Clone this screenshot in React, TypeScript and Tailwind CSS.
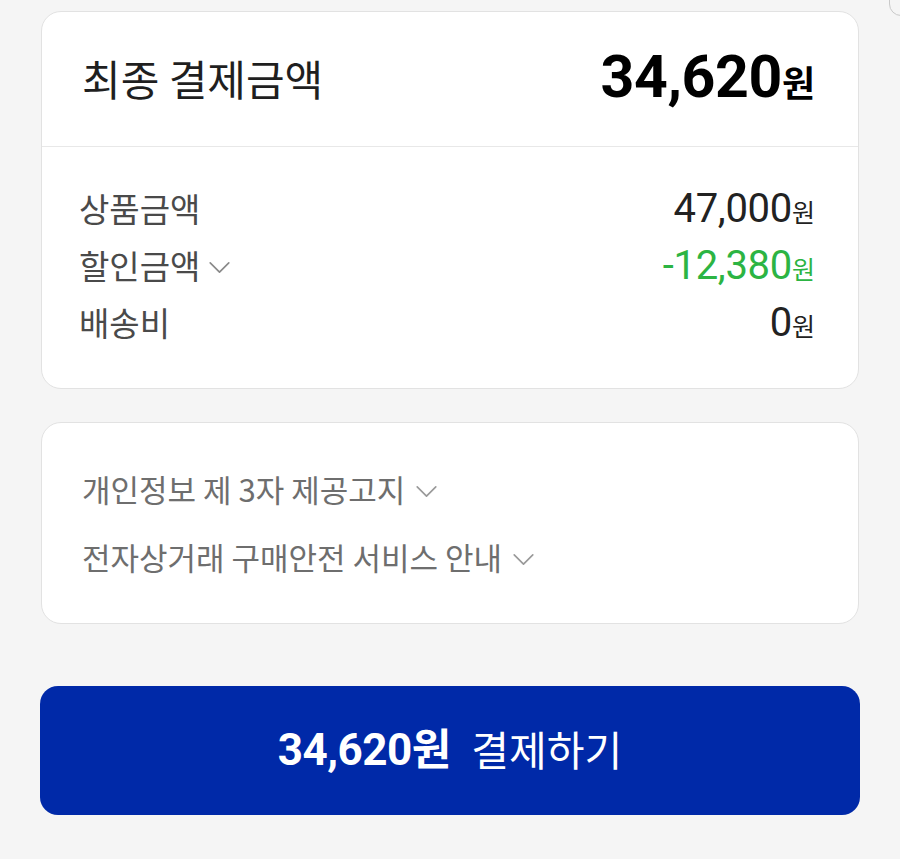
import React from "react";

const KR = '"Noto Sans CJK KR", "Noto Sans", sans-serif';
const NUM = 'Roboto, "Noto Sans CJK KR", sans-serif';

function Chevron({ className = "" }: { className?: string }) {
  return (
    <svg viewBox="0 0 24 14" className={className} fill="none" stroke="currentColor" strokeWidth={1.8} strokeLinecap="round" strokeLinejoin="round">
      <polyline points="2,2 12,12 22,2" />
    </svg>
  );
}

function PriceRow({
  label,
  amount,
  green,
  chevron,
}: {
  label: string;
  amount: string;
  green?: boolean;
  chevron?: boolean;
}) {
  return (
    <div className="flex h-[57px] items-center justify-between">
      <div className="flex items-center gap-[8px] text-[33px] text-[#4a4a4a]" style={{ fontFamily: KR }}>
        <span>{label}</span>
        {chevron && <Chevron className="mt-[3px] h-[13px] w-[23px] text-[#8a8a8a]" />}
      </div>
      <div
        className={`flex items-baseline ${green ? "text-[#2cb443]" : "text-[#222]"}`}
        style={{ fontFamily: NUM }}
      >
        <span className="text-[40px] tracking-[-0.3px]">{amount}</span>
        <span className="text-[25px]" style={{ fontFamily: KR }}>원</span>
      </div>
    </div>
  );
}

export default function App() {
  const policies = ["개인정보 제 3자 제공고지", "전자상거래 구매안전 서비스 안내"];

  return (
    <div className="relative h-[859px] w-[900px] overflow-hidden bg-[#f5f5f5] px-[41px] pt-[11px]">
      <div className="absolute left-[889px] top-[-30px] h-[46px] w-[40px] rounded-[12px] border border-[#c9c9c9] bg-[#f5f5f5]" />

      {/* final amount card */}
      <div className="rounded-[20px] border border-[#e2e2e2] bg-white">
        <div className="flex h-[135px] items-center justify-between border-b border-[#e8e8e8] pb-[4px] pl-[40px] pr-[43px]">
          <span className="text-[42px] text-[#1f1f1f]" style={{ fontFamily: KR }}>
            최종 결제금액
          </span>
          <div className="flex items-baseline text-black" style={{ fontFamily: NUM }}>
            <span className="text-[59px] font-bold tracking-[-0.4px]">34,620</span>
            <span className="text-[36px] font-bold" style={{ fontFamily: KR }}>원</span>
          </div>
        </div>
        <div className="pb-[37px] pl-[37px] pr-[43px] pt-[33px]">
          <PriceRow label="상품금액" amount="47,000" />
          <PriceRow label="할인금액" amount="-12,380" green chevron />
          <PriceRow label="배송비" amount="0" />
        </div>
      </div>

      {/* notices */}
      <div className="mt-[33px] rounded-[20px] border border-[#e2e2e2] bg-white py-[32px] pl-[40px]">
        {policies.map((p) => (
          <div key={p} className="flex h-[68px] items-center gap-[10px] text-[31px] text-[#6e6e6e]" style={{ fontFamily: KR }}>
            <span>{p}</span>
            <Chevron className="mt-[4px] h-[13px] w-[23px] text-[#9a9a9a]" />
          </div>
        ))}
      </div>

      {/* pay button */}
      <button className="-mx-[1px] mt-[62px] flex h-[129px] w-[820px] items-center justify-center gap-[20px] rounded-[18px] bg-[#0029a8] pb-[4px] text-white">
        <span className="flex items-baseline font-bold" style={{ fontFamily: NUM }}>
          <span className="text-[44px] tracking-[-0.5px]">34,620</span>
          <span className="text-[43px]" style={{ fontFamily: KR }}>원</span>
        </span>
        <span className="text-[41px]" style={{ fontFamily: KR }}>결제하기</span>
      </button>
    </div>
  );
}
